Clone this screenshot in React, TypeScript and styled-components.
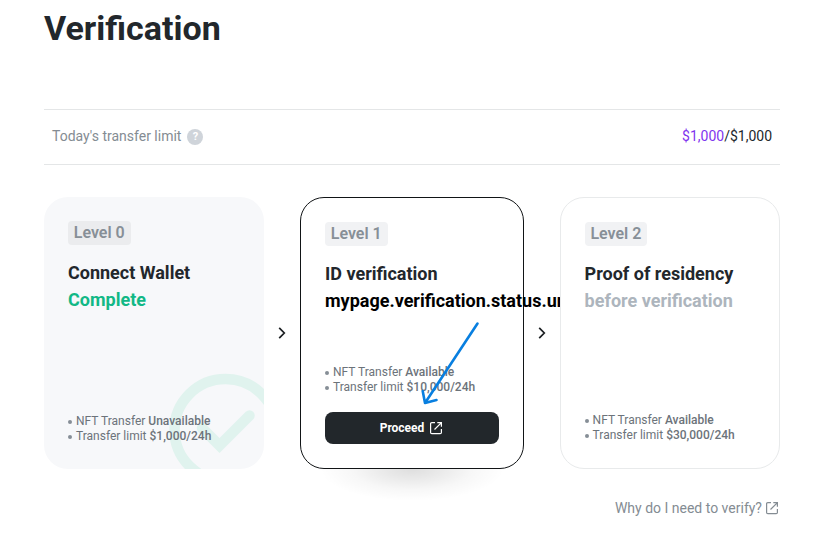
import React from "react";
import styled, { createGlobalStyle, css } from "styled-components";

const GlobalStyle = createGlobalStyle`
  * { box-sizing: border-box; }
  body {
    margin: 0;
    background: #fff;
    color: #22272c;
    font-family: Roboto, "Liberation Sans", sans-serif;
    overflow: hidden;
  }
`;

const Page = styled.main`
  position: relative;
  width: 837px;
  height: 544px;
  padding: 7px 57px 0 44px;
  display: flex;
  flex-direction: column;
`;

const Title = styled.h1`
  margin: 0;
  height: 102px;
  font-size: 34px;
  line-height: 42px;
  font-weight: 700;
`;

const LimitBar = styled.section`
  display: flex;
  align-items: center;
  justify-content: space-between;
  height: 56px;
  padding: 0 8px 2px;
  border-top: 1px solid #e4e6e7;
  border-bottom: 1px solid #e4e6e7;
  font-size: 14px;
  line-height: 20px;
`;

const LimitLabel = styled.div`
  display: flex;
  align-items: center;
  color: #848c93;
`;

const Help = styled.span`
  display: flex;
  align-items: center;
  justify-content: center;
  width: 16px;
  height: 16px;
  margin: 2px 0 0 6px;
  border-radius: 50%;
  background: #cfd4da;
  color: #fff;
  font-size: 11px;
  line-height: 16px;
  font-weight: 700;
`;

const Amount = styled.div`
  color: #22272c;
`;

const Used = styled.span`
  color: #7f35ee;
`;

const Levels = styled.section`
  display: flex;
  height: 272px;
  margin-top: 32px;
`;

type Variant = "done" | "current" | "next";

const Card = styled.article<{ $variant: Variant }>`
  position: relative;
  display: flex;
  flex-direction: column;
  align-items: flex-start;
  flex: none;
  width: 220px;
  border-radius: 24px;
  padding: 24px;
  background: #fff;
  ${({ $variant }) =>
    $variant === "done" &&
    css`
      background: #f7f8fa;
      overflow: hidden;
    `}
  ${({ $variant }) =>
    $variant === "current" &&
    css`
      width: 224px;
      border: 1px solid #111416;
      &::after {
        content: "";
        position: absolute;
        top: 100%;
        left: 20px;
        right: 20px;
        height: 32px;
        margin-top: 1px;
        background: radial-gradient(
          ellipse 92px 32px at 50% 0,
          rgba(0, 0, 0, 0.13) 0%,
          rgba(0, 0, 0, 0.085) 30%,
          rgba(0, 0, 0, 0.03) 65%,
          rgba(0, 0, 0, 0) 100%
        );
      }
    `}
  ${({ $variant }) =>
    $variant === "next" &&
    css`
      padding-left: 23.6px;
      border: 1px solid #e8eaeb;
    `}
`;

const Badge = styled.span<{ $dim?: boolean }>`
  height: 24px;
  padding: 0 5.8px;
  border-radius: 4px;
  background: ${({ $dim }) => ($dim ? "#ebecee" : "#f1f2f4")};
  color: #878f97;
  font-size: 16px;
  line-height: 24px;
  font-weight: 600;
`;

const Name = styled.h2`
  margin: 14px 0 0;
  font-size: 18px;
  line-height: 27px;
  font-weight: 700;
  white-space: nowrap;
`;

const Status = styled.p<{ $color: string }>`
  margin: 0;
  color: ${({ $color }) => $color};
  font-size: 18px;
  line-height: 27px;
  font-weight: 700;
  white-space: nowrap;
`;

const Facts = styled.ul`
  position: relative;
  list-style: none;
  margin: auto 0 0;
  padding: 0 0 1px;
  font-size: 12px;
  line-height: 15px;
  color: #6c737a;
`;

const Fact = styled.li`
  display: flex;
  align-items: center;
  white-space: pre;
  &::before {
    content: "";
    width: 4px;
    height: 4px;
    margin: 1px 4px 0 0;
    border-radius: 50%;
    background: #868e96;
  }
`;

const Strong = styled.strong`
  font-weight: 500;
`;

const Proceed = styled.button`
  display: flex;
  align-items: center;
  justify-content: center;
  gap: 5px;
  flex: none;
  width: 174px;
  height: 32px;
  margin-top: 16px;
  padding: 0 1px 0 0;
  border: 0;
  border-radius: 8px;
  background: #22272b;
  color: #fff;
  font: 700 12px/18px Roboto, sans-serif;
`;

const Step = styled.div`
  display: flex;
  align-items: center;
  justify-content: center;
  width: 36px;
  padding-right: 1px;
`;

const Watermark = styled.svg`
  position: absolute;
  left: 125px;
  top: 176px;
`;

const Footer = styled.a`
  display: flex;
  align-items: center;
  align-self: flex-end;
  gap: 3px;
  margin: 29px 1px 0 0;
  color: #848c93;
  font-size: 14px;
  line-height: 20px;
`;

const Pointer = styled.svg`
  position: absolute;
  left: 410px;
  top: 315px;
`;

const ExternalIcon = () => (
  <svg width="14" height="14" viewBox="0 0 14 14" fill="none" stroke="currentColor" strokeWidth="1.2">
    <path d="M6 1.6H2.8Q1.6 1.6 1.6 2.8V11.4Q1.6 12.6 2.8 12.6H11.2Q12.4 12.6 12.4 11.4V8" />
    <path d="M8.3 1.6H12.4V5.7M12.2 1.8L5.5 8.5" />
  </svg>
);

const Chevron = () => (
  <Step>
    <svg width="10" height="14" viewBox="0 0 10 14" fill="none" stroke="#1b1f22" strokeWidth="1.7">
      <path d="M2.2 1.8L7.3 7L2.2 12.2" />
    </svg>
  </Step>
);

const Benefits = ({ access, limit }: { access: string; limit: string }) => (
  <Facts>
    <Fact>NFT Transfer <Strong>{access}</Strong></Fact>
    <Fact>Transfer limit <Strong>{limit}</Strong></Fact>
  </Facts>
);

export default function App() {
  return (
    <>
      <GlobalStyle />
      <Page>
        <Title>Verification</Title>
        <LimitBar>
          <LimitLabel>
            Today's transfer limit<Help>?</Help>
          </LimitLabel>
          <Amount><Used>$1,000</Used>/$1,000</Amount>
        </LimitBar>
        <Levels>
          <Card $variant="done">
            <Watermark width="112" height="112" viewBox="0 0 112 112" fill="none" stroke="#e0f3ee">
              <circle cx="56.5" cy="57" r="51" strokeWidth="10.5" />
              <path d="M33 55L50.5 72.5L80.5 42.5" strokeWidth="10.5" strokeLinecap="round" />
            </Watermark>
            <Badge $dim>Level 0</Badge>
            <Name>Connect Wallet</Name>
            <Status $color="#12b886">Complete</Status>
            <Benefits access="Unavailable" limit="$1,000/24h" />
          </Card>
          <Chevron />
          <Card $variant="current">
            <Badge>Level 1</Badge>
            <Name>ID verification</Name>
            <Status $color="#000">mypage.verification.status.un</Status>
            <Benefits access="Available" limit="$10,000/24h" />
            <Proceed>Proceed <ExternalIcon /></Proceed>
          </Card>
          <Chevron />
          <Card $variant="next">
            <Badge>Level 2</Badge>
            <Name>Proof of residency</Name>
            <Status $color="#adb5bd">before verification</Status>
            <Benefits access="Available" limit="$30,000/24h" />
          </Card>
        </Levels>
        <Footer>Why do I need to verify? <ExternalIcon /></Footer>
        <Pointer width="75" height="95" viewBox="0 0 75 95" fill="none" stroke="#087fe0" strokeWidth="2.6" strokeLinecap="round" strokeLinejoin="round">
          <path d="M67.5 8.5L15 88M12.7 76L15 88L26.5 85" />
        </Pointer>
      </Page>
    </>
  );
}
